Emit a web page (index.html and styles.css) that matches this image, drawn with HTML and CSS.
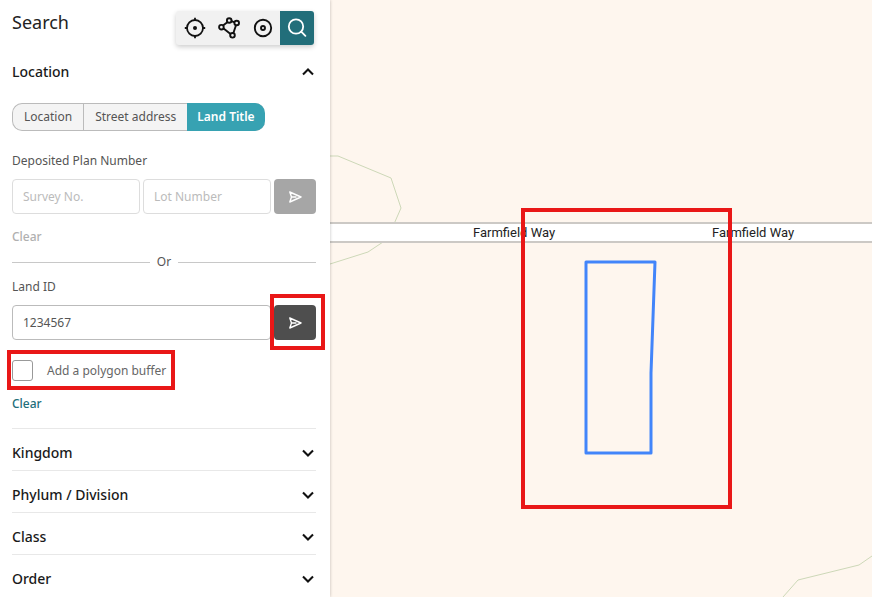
FILE: index.html
```html
<!DOCTYPE html>
<html lang="en">
<head>
<meta charset="utf-8">
<meta name="viewport" content="width=device-width, initial-scale=1">
<title>Search</title>
<link rel="stylesheet" href="styles.css">
</head>
<body>
<svg class="defs" aria-hidden="true">
  <symbol id="chevron" viewBox="0 0 14 14"><path d="M2 4.5 7 9.5 12 4.5" fill="none" stroke="currentColor" stroke-width="2.1"/></symbol>
  <symbol id="send" viewBox="0 0 16 16"><path d="M2.8 3 14 8 2.8 13 4.5 8ZM4.5 8H9" fill="none" stroke="currentColor" stroke-width="1.4" stroke-linejoin="round" stroke-linecap="round"/></symbol>
</svg>
<div class="app">
  <aside class="panel">
    <header class="header">
      <h1 class="title">Search</h1>
      <div class="toolbar">
        <button class="tool" type="button" aria-label="Point">
          <svg class="tool-icon" viewBox="0 0 22 22"><g fill="none" stroke="currentColor" stroke-width="1.8"><circle cx="11" cy="11" r="8"/><path d="M11 .8V4M11 18v3.2M.8 11H4M18 11h3.2"/></g><circle cx="11" cy="11" r="2" fill="currentColor"/></svg>
        </button>
        <button class="tool" type="button" aria-label="Polygon">
          <svg class="tool-icon" viewBox="0 0 22 22"><g fill="none" stroke="currentColor" stroke-width="1.9"><path d="M5 8.5 9.3 5.2M13.6 4.2 16.5 5.4M18 8.3 15.3 16.2M5.6 11.6 12.5 17"/><circle cx="3.4" cy="10.2" r="2.3"/><circle cx="11.2" cy="3.5" r="2.3"/><circle cx="18.7" cy="6" r="2.3"/><circle cx="14.5" cy="18.3" r="2.3"/></g></svg>
        </button>
        <button class="tool" type="button" aria-label="Circle">
          <svg class="tool-icon" viewBox="0 0 22 22"><g fill="none" stroke="currentColor" stroke-width="1.9"><circle cx="11" cy="11" r="8.2"/><circle cx="11" cy="11" r="2"/></g></svg>
        </button>
        <button class="tool tool-active" type="button" aria-label="Search">
          <svg class="tool-icon" viewBox="0 0 22 22"><g fill="none" stroke="currentColor" stroke-width="1.8" stroke-linecap="round"><circle cx="10" cy="9.5" r="7.2"/><path d="m15.2 14.7 4.2 4.2"/></g></svg>
        </button>
      </div>
    </header>

    <section class="location">
      <h2 class="heading"><button class="toggle" type="button" aria-expanded="true">Location<svg class="chevron chevron-up"><use href="#chevron"/></svg></button></h2>
      <div class="tabs">
        <button class="tab" type="button">Location</button>
        <button class="tab" type="button">Street address</button>
        <button class="tab tab-active" type="button">Land Title</button>
      </div>

      <form class="form">
        <label class="label" for="survey">Deposited Plan Number</label>
        <div class="fields">
          <input class="input" id="survey" type="text" placeholder="Survey No.">
          <input class="input" type="text" placeholder="Lot Number" aria-label="Lot Number">
          <button class="send" type="button" aria-label="Search by plan" disabled><svg class="send-icon"><use href="#send"/></svg></button>
        </div>
        <button class="clear" type="button" disabled>Clear</button>
      </form>

      <div class="divider">Or</div>

      <form class="form">
        <label class="label" for="land">Land ID</label>
        <div class="fields">
          <input class="input input-filled" id="land" type="text" value="1234567">
          <div class="marked">
            <button class="send" type="button" aria-label="Search by land ID"><svg class="send-icon"><use href="#send"/></svg></button>
          </div>
        </div>
        <label class="buffer marked"><input class="checkbox" type="checkbox">Add a polygon buffer</label>
        <button class="clear" type="button">Clear</button>
      </form>
    </section>

    <div class="groups">
      <h2 class="group"><button class="toggle" type="button">Kingdom<svg class="chevron"><use href="#chevron"/></svg></button></h2>
      <h2 class="group"><button class="toggle" type="button">Phylum / Division<svg class="chevron"><use href="#chevron"/></svg></button></h2>
      <h2 class="group"><button class="toggle" type="button">Class<svg class="chevron"><use href="#chevron"/></svg></button></h2>
      <h2 class="group"><button class="toggle" type="button">Order<svg class="chevron"><use href="#chevron"/></svg></button></h2>
    </div>
  </aside>

  <main class="map">
    <svg class="canvas" role="img" aria-label="Map of Farmfield Way">
      <g class="contour">
        <path d="M0 156H8L61 178 71 208 64 224"/>
        <path d="M53 242 38 252 0 264"/>
        <path d="M453 597 468 580 529 565 542 556"/>
      </g>
      <rect class="road" x="-2" y="223" width="110%" height="19"/>
      <text class="street" x="143" y="237">Farmfield Way</text>
      <text class="street" x="382" y="237">Farmfield Way</text>
      <path class="parcel" d="M256 262H325L321 373V453H256Z"/>
      <rect class="highlight" x="193" y="210" width="207" height="297"/>
    </svg>
  </main>
</div>
</body>
</html>
```

FILE: styles.css
```css
* {
  box-sizing: border-box;
}

body {
  margin: 0;
  font-family: "Noto Sans", sans-serif;
  font-size: 12px;
  line-height: 18px;
  color: #555;
  background: #fff;
}

button,
input {
  margin: 0;
  font: inherit;
  color: inherit;
}

button {
  padding: 0;
  border: 0;
  background: none;
}

.defs {
  display: none;
}

.app {
  display: flex;
  height: 100vh;
  overflow: hidden;
}

.panel {
  flex: 0 0 330px;
  min-width: 0;
  padding: 11px 14px 0 12px;
  background: #fff;
  box-shadow: 0 0 3px rgba(0, 0, 0, 0.25);
  z-index: 1;
}

.header {
  display: flex;
  justify-content: space-between;
  align-items: flex-start;
  padding-right: 2px;
}

.title {
  margin: 0;
  font-size: 18px;
  font-weight: 400;
  line-height: 22px;
  color: #222;
}

.toolbar {
  display: flex;
  padding-left: 2px;
  border-radius: 3px;
  background: #f1f1f1;
  box-shadow: 0 2px 5px rgba(0, 0, 0, 0.2);
}

.tool {
  display: grid;
  place-items: center;
  width: 34px;
  height: 34px;
  color: #111;
}

.tool-active {
  border-radius: 0 3px 3px 0;
  background: #226e7a;
  color: #fff;
}

.tool-icon {
  width: 22px;
  height: 22px;
}

.heading,
.group {
  margin: 0;
  font-size: 14px;
  font-weight: 500;
  line-height: 20px;
  color: #1a1a1a;
}

.heading {
  margin-top: 17px;
}

.toggle {
  display: flex;
  justify-content: space-between;
  align-items: center;
  width: 100%;
}

.chevron {
  width: 14px;
  height: 14px;
  margin-right: 1px;
  color: #111;
}

.chevron-up {
  transform: rotate(180deg);
}

.tabs {
  display: flex;
  width: fit-content;
  margin-top: 21px;
  border: 1px solid #bbb;
  border-right: 0;
  border-radius: 10px;
  background: #f4f4f4;
}

.tab {
  height: 26px;
  padding: 0 11px;
}

.tab + .tab {
  border-left: 1px solid #bbb;
}

.tabs .tab-active {
  height: 28px;
  margin: -1px 0;
  padding: 0 10px;
  border-left: 0;
  border-radius: 0 10px 10px 0;
  background: #37a2b2;
  color: #fff;
  font-weight: 600;
}

.form {
  display: flex;
  flex-direction: column;
  align-items: flex-start;
}

.tabs + .form {
  margin-top: 21px;
}

.label {
  margin-bottom: 9px;
}

.fields {
  display: flex;
  gap: 3px;
  width: 100%;
}

.input {
  flex: 1 1 0;
  min-width: 0;
  height: 35px;
  padding: 0 10px;
  border: 1px solid #ddd;
  border-radius: 4px;
  outline: 0;
  background: #fff;
}

.input::placeholder {
  color: #bbb;
  opacity: 1;
}

.input-filled {
  border-color: #bbb;
}

.send {
  display: grid;
  place-items: center;
  width: 42px;
  height: 35px;
  border-radius: 4px;
  background: #4e4e4e;
  color: #fff;
}

.send:disabled {
  background: #a6a6a6;
}

.send-icon {
  width: 16px;
  height: 16px;
}

.clear {
  font-weight: 500;
  color: #226e7a;
}

.fields + .clear {
  margin-top: 14px;
}

.clear:disabled {
  color: #b0b0b0;
}

.divider {
  display: flex;
  align-items: center;
  gap: 7px;
  margin: 7px 0;
}

.divider::before,
.divider::after {
  content: "";
  flex: 1;
  height: 1px;
  background: #c8c8c8;
}

.marked {
  position: relative;
}

.marked::after {
  content: "";
  position: absolute;
  inset: -11px -9px -10px -4px;
  border: 4px solid #e91717;
}

.buffer {
  display: flex;
  align-items: center;
  gap: 14px;
  margin: 20px 0 14px;
  color: #666;
}

.buffer::after {
  inset: -10px -9px -9px -5px;
}

.checkbox {
  appearance: none;
  width: 21px;
  height: 21px;
  border: 1px solid #999;
  border-radius: 3px;
  background: #fff;
}

.groups {
  margin-top: 15px;
}

.group {
  display: flex;
  align-items: center;
  height: 42px;
  padding-top: 6px;
  border-top: 1px solid #e8e8e8;
}

.map {
  flex: 1;
  min-width: 0;
  background: #fef6ee;
}

.canvas {
  display: block;
  width: 100%;
  height: 100%;
}

.contour {
  fill: none;
  stroke: #cdd8b8;
}

.road {
  fill: #fff;
  stroke: #ccc9c5;
  stroke-width: 2px;
}

.street {
  font-family: Roboto, sans-serif;
  font-size: 13px;
  fill: #222;
}

.parcel {
  fill: none;
  stroke: #4285fa;
  stroke-width: 3px;
  stroke-linejoin: round;
}

.highlight {
  fill: none;
  stroke: #e91717;
  stroke-width: 4px;
}
```
